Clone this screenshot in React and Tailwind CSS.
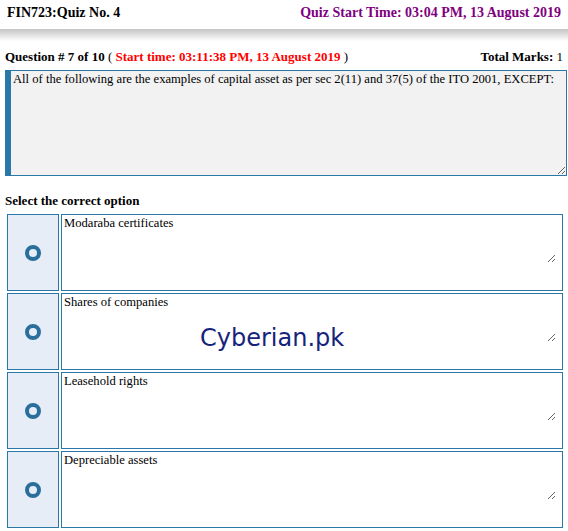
const options = [
  "Modaraba certificates",
  "Shares of companies",
  "Leasehold rights",
  "Depreciable assets",
];

function Ring() {
  return (
    <svg width="18" height="18" viewBox="0 0 18 18">
      <circle cx="9" cy="9" r="6" fill="none" stroke="#2a6f9b" strokeWidth="4" />
    </svg>
  );
}

export default function App() {
  return (
    <div className="w-[568px] h-[531px] overflow-hidden bg-white text-black font-['Liberation_Serif',serif] relative">
      <div className="h-[29px] flex items-start justify-between px-[7px] pt-[2px] font-bold text-[14px]">
        <span>FIN723:Quiz No. 4</span>
        <span className="text-[#800080]">Quiz Start Time: 03:04 PM, 13 August 2019</span>
      </div>
      <div className="h-[12px] bg-gradient-to-b from-[#c4c4c4] to-white"></div>

      <div className="mt-[6px] px-[5px] flex justify-between text-[13px]">
        <span className="font-bold">
          Question # 7 of 10 <span className="font-normal">(</span>{" "}
          <span className="text-[#ff0000]">Start time: 03:11:38 PM, 13 August 2019</span>{" "}
          <span className="font-normal">)</span>
        </span>
        <span>
          <span className="font-bold">Total Marks:</span> 1
        </span>
      </div>

      <textarea
        readOnly
        defaultValue="All of the following are the examples of capital asset as per sec 2(11) and 37(5) of the ITO 2001, EXCEPT:"
        className="block ml-[5px] mt-[3px] w-[562px] h-[106px] bg-[#f2f2f2] border border-[#2a78a8] border-l-[6px] px-[2px] py-[1px] text-[12.6px] leading-[15px] outline-none"
      />

      <div className="mt-[15px] px-[5px] font-bold text-[13px]">Select the correct option</div>

      <div className="mt-[4px] pl-[7px] flex flex-col gap-[2px]">
        {options.map((o) => (
          <div key={o} className="flex gap-[2px] h-[77px]">
            <div className="w-[52px] bg-[#e6edf7] border border-[#2a78a8] flex items-center justify-center">
              <Ring />
            </div>
            <div className="w-[502px] h-full bg-white border border-[#2a78a8]">
              <textarea
                readOnly
                defaultValue={o}
                className="block w-[494px] h-[48px] bg-transparent border-0 px-[2px] py-[1px] text-[12.6px] leading-[15px] outline-none"
              />
            </div>
          </div>
        ))}
      </div>

      <div className="absolute left-[200px] top-[320px] text-[24px] text-[#16237c] font-['DejaVu_Sans',sans-serif] pointer-events-none">
        Cyberian.pk
      </div>
    </div>
  );
}
